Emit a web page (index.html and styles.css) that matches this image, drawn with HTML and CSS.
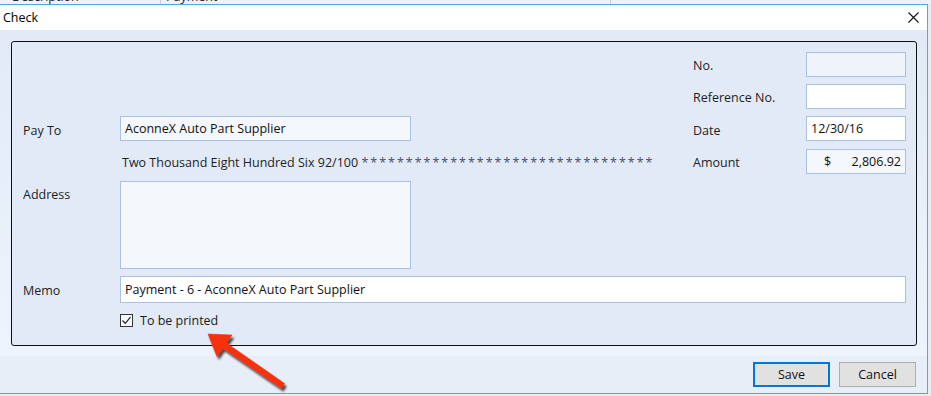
FILE: index.html
```html
<!DOCTYPE html>
<html>
<head>
<meta charset="utf-8">
<link rel="stylesheet" href="styles.css">
</head>
<body>
<div class="strip">
  <div class="strip-cell c1"><span>Description</span></div>
  <div class="strip-cell c2"><span>Payment</span></div>
  <div class="strip-cell c3"></div>
</div>
<div class="dialog">
  <div class="titlebar">
    <span class="title">Check</span>
    <svg class="close" width="11" height="11" viewBox="0 0 11 11"><path d="M0.5 0.5 L10.5 10.5 M10.5 0.5 L0.5 10.5" stroke="#111" stroke-width="1.1" fill="none"/></svg>
  </div>
  <div class="body">
    <div class="panel">
      <div class="lbl r1 cr1">No.</div>
      <div class="inp r1 cr2 disabled"></div>
      <div class="lbl r2 cr1">Reference No.</div>
      <div class="inp r2 cr2"></div>
      <div class="lbl r3 cl1">Pay To</div>
      <div class="inp r3 cl2 soft">AconneX Auto Part Supplier</div>
      <div class="lbl r3 cr1">Date</div>
      <div class="inp r3 cr2">12/30/16</div>
      <div class="words r4">Two Thousand Eight Hundred Six 92/100 <span class="stars">* * * * * * * * * * * * * * * * * * * * * * * * * * * * * * * * *</span></div>
      <div class="lbl r4 cr1">Amount</div>
      <div class="inp r4 cr2 soft amount"><span>$</span><span>2,806.92</span></div>
      <div class="lbl r5 cl1 top">Address</div>
      <div class="inp r5 cl2 soft area"></div>
      <div class="lbl r6 cl1">Memo</div>
      <div class="inp r6 memo">Payment - 6 - AconneX Auto Part Supplier</div>
      <div class="check r7">
        <span class="box"><svg width="11" height="11" viewBox="0 0 11 11"><path d="M1.5 5.5 L4.3 8.3 L9.5 2.2" stroke="#222" stroke-width="1.2" fill="none"/></svg></span>
        <span>To be printed</span>
      </div>
    </div>
  </div>
  <div class="footer">
    <div class="btn primary">Save</div>
    <div class="btn">Cancel</div>
  </div>
</div>
<svg class="arrow" width="96" height="70" viewBox="0 0 96 70">
  <defs>
    <filter id="sh" x="-20%" y="-20%" width="150%" height="150%">
      <feGaussianBlur in="SourceAlpha" stdDeviation="1.3"/>
      <feOffset dx="2" dy="2.5" result="b"/>
      <feComponentTransfer><feFuncA type="linear" slope="0.7"/></feComponentTransfer>
      <feMerge><feMergeNode/><feMergeNode in="SourceGraphic"/></feMerge>
    </filter>
  </defs>
  <polygon filter="url(#sh)" fill="#f5330f" stroke="#f5330f" stroke-width="0.6" stroke-linejoin="round" points="8,6 32,7 26.3,15 84.5,55.5 81.3,60.3 23,20.3 17,28.5"/>
</svg>
</body>
</html>
```

FILE: styles.css
```css
* { box-sizing: border-box; }
html, body { margin: 0; padding: 0; }
body {
  width: 931px;
  height: 396px;
  background: #e9edf2;
  font-family: "Open Sans", "Noto Sans", sans-serif;
  font-size: 12.5px;
  color: #1b1b1b;
  position: relative;
  overflow: hidden;
}
.strip {
  height: 4px;
  display: flex;
  background: #eef1f5;
  overflow: hidden;
}
.strip-cell {
  height: 4px;
  overflow: hidden;
  border-right: 1px solid #c9d0d8;
  padding-left: 12px;
  line-height: 12px;
}
.strip-cell span { display: block; margin-top: -9px; color: #222; font-size: 12.5px; }
.c1 { width: 161px; }
.c2 { width: 450px; padding-left: 5px; }
.c3 { flex: 1; border-right: none; }

.dialog {
  width: 928px;
  height: 390px;
  border-top: 1px solid #3fb6d0;
  border-right: 1px solid #3fb6d0;
  border-bottom: 1px solid #3fb6d0;
  background: #e9eff8;
  display: flex;
  flex-direction: column;
}
.titlebar {
  height: 25px;
  background: #ffffff;
  display: flex;
  align-items: center;
  justify-content: space-between;
  padding: 0 8px 0 3px;
}
.title { font-size: 12.5px; color: #000; }
.close { display: block; }

.body {
  height: 326px;
  padding: 11px 10px 10px 11px;
  background: linear-gradient(#e1eaf6, #eef4fd);
}
.panel {
  height: 305px;
  border: 1px solid #101010;
  border-radius: 3px;
  background: #e1eaf6;
  padding: 10px 10px 0 11px;
  display: grid;
  grid-template-columns: 97px 291px 1fr 114px 100px;
  grid-template-rows: 25px 25px 26px 25px 88px 27px auto;
  row-gap: 7px;
}
.r1 { grid-row: 1; }
.r2 { grid-row: 2; }
.r3 { grid-row: 3; }
.r4 { grid-row: 4; }
.r5 { grid-row: 5; }
.r6 { grid-row: 6; }
.r7 { grid-row: 7; }
.cl1 { grid-column: 1; }
.cl2 { grid-column: 2; }
.cr1 { grid-column: 4; padding-left: 1px; }
.cr2 { grid-column: 5; }

.lbl {
  align-self: center;
  color: #1e1e1e;
  padding-top: 2px;
}
.lbl.top { align-self: start; padding-top: 5px; }

.inp {
  height: 25px;
  background: #ffffff;
  border: 1px solid #a9c0e2;
  padding: 0 4px;
  display: flex;
  align-items: center;
  white-space: nowrap;
  color: #111;
}
.inp.soft { background: #f4f7fc; }
.inp.disabled { background: #eff3fa; }
.inp.area { height: 88px; }
.inp.memo { grid-column: 2 / 6; height: 27px; }
.inp.amount { justify-content: space-between; padding: 0 4px 0 17px; }

.words {
  grid-column: 2 / 4;
  align-self: center;
  padding-left: 2px;
  padding-top: 2px;
  white-space: nowrap;
  color: #1e1e1e;
}
.stars { word-spacing: -1.25px; color: #4e4a70; }

.check {
  grid-column: 2 / 4;
  display: flex;
  align-items: center;
  gap: 7px;
  margin-top: 3px;
  height: 15px;
}
.box {
  width: 13px;
  height: 13px;
  border: 1px solid #333;
  background: #f6f8fb;
  display: flex;
  align-items: center;
  justify-content: center;
}
.box svg { display: block; }

.footer {
  flex: 1;
  display: flex;
  justify-content: flex-end;
  gap: 9px;
  padding: 6px 11px 0 0;
  background: #e8eef8;
}
.btn {
  width: 77px;
  height: 25px;
  background: #e1e1e1;
  border: 1px solid #adadad;
  display: flex;
  align-items: center;
  justify-content: center;
  color: #111;
}
.btn.primary { border: 2px solid #0078d7; }

.arrow {
  position: absolute;
  left: 200px;
  top: 328px;
  pointer-events: none;
}
```
